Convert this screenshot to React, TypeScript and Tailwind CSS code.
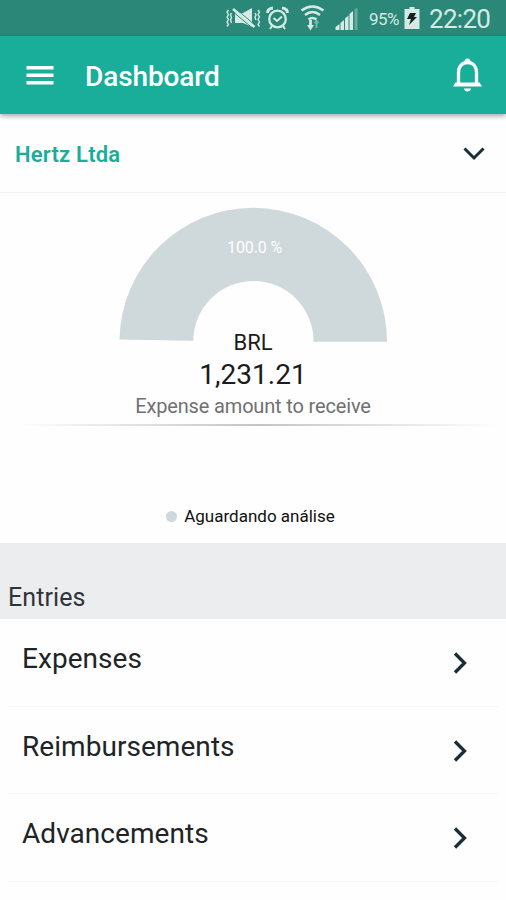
const entries = ["Expenses", "Reimbursements", "Advancements"];

function StatusBar() {
  return (
    <div className="flex h-9 items-center bg-[#2b8777] pl-[226px] text-[#d3ebe4]">
      {/* Muted, vibrating */}
      <svg width="35" height="36" viewBox="0 0 35 36" fill="none" stroke="currentColor">
        <path d="M2.500 10l-1.500 2 1.500 2.500L1 17l1.500 2.500L1 22l1.500 2.500-1.500 2M5.500 13l-1 2 1 2.500-1 2.500 1 3M32 10l1.500 2-1.500 2.500 1.500 2.500-1.500 2.500 1.500 2.500-1.500 2.500 1.500 2M29 13l1 2-1 2.500 1 2.500" strokeWidth="1.4" />
        <path d="M9 13h8l9-5v19l-9-4H9z" fill="currentColor" stroke="none" />
        <path d="M8 7.500l21 17.500" stroke="#2b8777" strokeWidth="1" />
        <path d="M7 9l21.500 18" strokeWidth="2.700" />
        <path d="M6 11l21 17.500" stroke="#2b8777" strokeWidth="1" />
      </svg>
      {/* Alarm */}
      <svg className="ml-[5px]" width="24" height="36" viewBox="0 0 24 36" fill="none" stroke="currentColor">
        <circle cx="11.500" cy="19" r="8.300" strokeWidth="2.300" />
        <path d="M1.500 13q0-4.500 5.500-5M21.500 13q0-4.500-5.500-5" strokeWidth="2.800" />
        <path d="M7.500 18l3.500 3 5-4.500M6 26l-2 3M17 26l2 3" strokeWidth="2" />
      </svg>
      {/* Wifi */}
      <svg className="ml-[10px]" width="26" height="36" viewBox="0 0 26 36" fill="none" stroke="currentColor">
        <path d="M1.500 10.500q11-8 22 0M5 15q7.500-6 15 0M8.500 19.500q4-3 8 0" strokeWidth="2.600" />
        <path d="M10.500 20v6" strokeWidth="2.800" />
        <path d="M7 25h7l-3.500 5.500z" fill="currentColor" stroke="none" />
        <path d="M16.500 28v-7M14.500 23l2-2 2 2" stroke="#79b5a8" strokeWidth="1.800" />
      </svg>
      {/* Signal */}
      <svg className="ml-[9px]" width="24" height="36" viewBox="0 0 24 36" fill="currentColor">
        <path d="M.5 30v-3l4-3v6zM5.500 30v-7l3.500-3v10zM10 30V18.500l3.500-3V30zM14.500 30V14l3.500-3v19z" />
        <path d="M19.500 30V9.500l3-2V30z" opacity=".35" />
      </svg>
      <span className="ml-[10px] mt-[3px] w-[35px] text-[17px] tracking-[-0.5px]">95%</span>
      {/* Battery */}
      <svg width="16" height="36" viewBox="0 0 16 36">
        <path d="M5.500 7h5v2H15.500v20H.5V9h5z" fill="currentColor" />
        <path d="M6 13h6l-2 4h3l-8 8 2-6H3z" fill="#12211e" />
      </svg>
      <span className="ml-[9px] mt-[3px] text-[26px] tracking-[-0.7px]">22:20</span>
    </div>
  );
}

function AppBar() {
  return (
    <header className="relative flex h-[78px] items-center bg-[#18ae9a] text-white shadow-[0_2px_5px_rgba(0,0,0,0.35)]">
      <svg className="ml-[26px] mt-px" width="28" height="20" viewBox="0 0 28 20" fill="currentColor">
        <path d="M.5 0h27v3.500H.5zM.5 7.500h27V11H.5zM.5 15h27v3.500H.5z" />
      </svg>
      <h1 className="ml-[31px] mt-[4px] flex-1 text-[28px] font-medium tracking-[-0.1px]">Dashboard</h1>
      <svg className="mr-[23px]" width="31" height="36" viewBox="0 0 31 36" fill="none" stroke="currentColor">
        <path d="M6.500 27V15.500C6.500 9 10.500 5.500 15.500 5.500S24.500 9 24.500 15.500V27" strokeWidth="3.300" />
        <path d="M3.500 25.500h24l2.500 4H1z" fill="currentColor" stroke="none" />
        <path d="M12.500 5a3 3.500 0 0 1 6 0zM12 31.500h7q-.5 3-3.500 3t-3.500-3z" fill="currentColor" stroke="none" />
      </svg>
    </header>
  );
}

function ExpenseChart() {
  return (
    <section className="relative flex h-[350px] flex-col items-center">
      <svg className="mt-[14px] ml-[1px] shrink-0" width="269" height="136" viewBox="0 0 269 136">
        <path d="M.5 132.500A133.800 133.800 0 0 1 134.300 .8A133.800 133.800 0 0 1 268 134.700H194.500A60 60 0 0 0 134.300 74A60 60 0 0 0 74.300 133.700z" fill="#cfd8da" />
      </svg>
      <span className="absolute left-[227px] top-[45px] text-[16px] leading-5 tracking-[-0.1px] text-white">100.0 %</span>
      <span className="-mt-[13px] text-[22px] leading-[26px] text-[#1c1c1c]">BRL</span>
      <span className="mt-[3px] text-[28px] leading-8 text-[#1c1c1c]">1,231.21</span>
      <span className="mt-[3px] text-[20px] leading-6 tracking-[-0.16px] text-[#707070]">Expense amount to receive</span>
      <div className="mt-[6px] ml-[10px] h-[2px] w-[482px] shrink-0 bg-linear-to-r from-transparent via-[#c4c4c4] to-transparent" />
      <div className="mt-[80px] -ml-[5px] flex items-center gap-[7px]">
        <span className="size-[11px] rounded-full bg-[#cfd8da]" />
        <span className="text-[17px] leading-5 text-[#111]">Aguardando análise</span>
      </div>
    </section>
  );
}

export default function App() {
  return (
    <div className="h-[900px] w-[506px] overflow-hidden bg-[#fefefe] font-['Roboto',sans-serif]">
      <StatusBar />
      <AppBar />
      <div className="flex h-[79px] items-center justify-between border-b border-[#f2f2f2] pl-[15px] pr-[20px]">
        <span className="mt-[2px] text-[22px] font-semibold tracking-[0.2px] text-[#18ae9a]">Hertz Ltda</span>
        <svg className="mt-[2px]" width="24" height="16" viewBox="0 0 24 16" fill="none" stroke="#172d38" strokeWidth="3">
          <path d="M2.500 2.500l9.500 9.500 9.500-9.500" />
        </svg>
      </div>
      <ExpenseChart />
      <div className="flex h-[76px] items-end bg-[#ecedef] pb-[5px] pl-2">
        <h2 className="text-[25px] leading-8 tracking-[0.1px] text-[#30343a]">Entries</h2>
      </div>
      {entries.map((name) => (
        <div key={name} className="mx-2 flex h-[87.6px] items-center justify-between border-b border-[#f7f7f7] pl-[14px] pr-[30px]">
          <span className="-mt-[6px] text-[28px] leading-9 tracking-[0.05px] text-[#202427]">{name}</span>
          <svg className="mt-[2px]" width="16" height="24" viewBox="0 0 16 24" fill="none" stroke="#172d38" strokeWidth="3.300">
            <path d="M3 2.500l9.500 9.500L3 21.500" />
          </svg>
        </div>
      ))}
    </div>
  );
}
